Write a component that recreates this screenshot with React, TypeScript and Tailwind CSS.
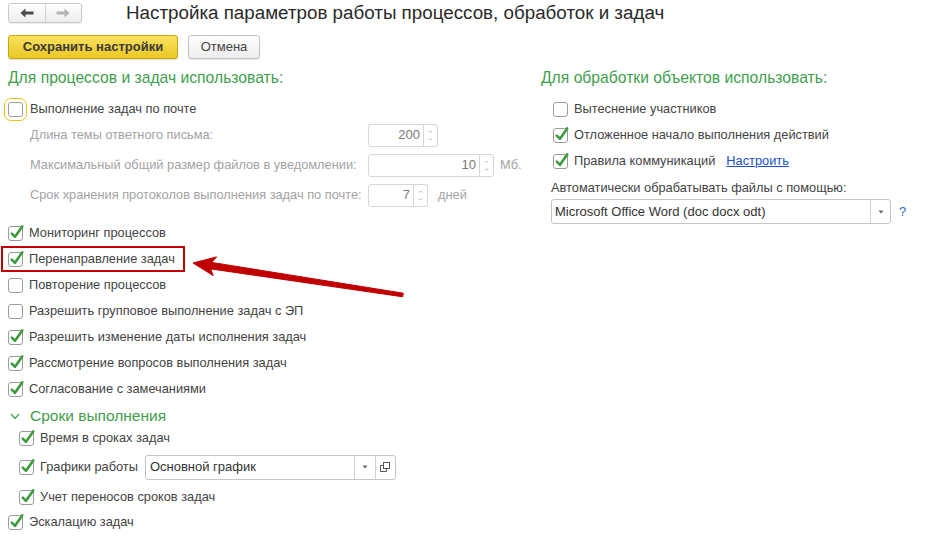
import React from "react";

function Box({ checked, focus }: { checked?: boolean; focus?: boolean }) {
  return (
    <span
      className={
        focus
          ? "relative inline-block w-[15px] h-[15px] shrink-0 rounded-[3px] border border-[#9c9c9c] bg-white outline-solid outline-1 outline-[#f0c21a] outline-offset-[3px]"
          : "relative inline-block w-[15px] h-[15px] shrink-0 rounded-[3px] border border-[#9c9c9c] bg-white"
      }
    >
      {checked && (
        <svg
          className="absolute left-[0px] top-[-3px] overflow-visible"
          width="15"
          height="16"
          viewBox="0 0 15 16"
        >
          <path
            d="M2.8 9.6 L6 12.8 L13.2 2.4"
            fill="none"
            stroke="#3c9a3c"
            strokeWidth="2.6"
            strokeLinecap="round"
            strokeLinejoin="round"
          />
        </svg>
      )}
    </span>
  );
}

function SpinArrows() {
  return (
    <div className="flex w-[14px] flex-col items-center justify-center gap-[5px] border-l border-[#d6d6d6]">
      <svg width="5" height="3" viewBox="0 0 5 3">
        <path d="M1 2.5 L2.5 1 L4 2.5" fill="none" stroke="#a8a8a8" strokeWidth="0.9" />
      </svg>
      <svg width="5" height="3" viewBox="0 0 5 3">
        <path d="M1 0.5 L2.5 2 L4 0.5" fill="none" stroke="#a8a8a8" strokeWidth="0.9" />
      </svg>
    </div>
  );
}

function Row({ children, className }: { children: React.ReactNode; className: string }) {
  return <div className={className}>{children}</div>;
}

function DropTri() {
  return (
    <svg width="6" height="4" viewBox="0 0 6 4">
      <path d="M0.5 0.5 L5.5 0.5 L3 3.5 Z" fill="#666" />
    </svg>
  );
}

export default function App() {
  return (
    <div className="relative w-[926px] h-[545px] overflow-hidden bg-white font-['Liberation_Sans',Arial,sans-serif] text-[12.8px] text-[#444]">
      {/* header */}
      <div className="flex items-start pt-[3px] pl-[8px]">
        <div className="flex h-[20px] w-[74px] rounded-[3px] border border-[#c9c9c9] bg-gradient-to-b from-white to-[#ececec] shadow-[0_1px_1px_rgba(0,0,0,0.08)]">
          <div className="flex w-[37px] items-center justify-center border-r border-[#d2d2d2]">
            <svg width="14" height="10" viewBox="0 0 14 10">
              <path d="M0.5 5 L5.5 0.5 L5.5 3.4 L13.5 3.4 L13.5 6.6 L5.5 6.6 L5.5 9.5 Z" fill="#4a4a4a" />
            </svg>
          </div>
          <div className="flex w-[36px] items-center justify-center">
            <svg width="14" height="10" viewBox="0 0 14 10">
              <path d="M13.5 5 L8.5 0.5 L8.5 3.4 L0.5 3.4 L0.5 6.6 L8.5 6.6 L8.5 9.5 Z" fill="#b4b4b4" />
            </svg>
          </div>
        </div>
        <div className="ml-[44px] text-[18.8px] leading-[20px] text-[#2a2a2a]">
          Настройка параметров работы процессов, обработок и задач
        </div>
      </div>

      {/* buttons */}
      <div className="mt-[12px] flex gap-[10px] pl-[8px]">
        <div className="flex h-[24px] w-[170px] items-center justify-center rounded-[3px] border border-[#c7a514] bg-gradient-to-b from-[#f9e15a] to-[#ebc821] text-[13px] font-bold text-[#3a3a3a] shadow-[0_1px_1px_rgba(0,0,0,0.15)]">
          Сохранить настройки
        </div>
        <div className="flex h-[24px] w-[72px] items-center justify-center rounded-[3px] border border-[#c2c2c2] bg-gradient-to-b from-white to-[#ededed] text-[13px] text-[#444] shadow-[0_1px_1px_rgba(0,0,0,0.1)]">
          Отмена
        </div>
      </div>

      {/* columns */}
      <div className="mt-[9px] flex">
        {/* left column */}
        <div className="w-[533px] pl-[8px]">
          <div className="h-[20px] text-[15.7px] leading-[20px] text-[#3f9e4d]">
            Для процессов и задач использовать:
          </div>
          <Row className="mt-[10px] flex h-[22px] items-center gap-[7px]">
            <Box focus />
            <span>Выполнение задач по почте</span>
          </Row>
          <div className="pl-[22px] text-[#a3a3a3]">
            <div className="flex h-[30px] items-center">
              <span className="w-[338px]">Длина темы ответного письма:</span>
              <div className="flex h-[23px] w-[70px] rounded-[3px] border border-[#d6d6d6] bg-white">
                <span className="flex flex-1 items-center justify-end pr-[3px] text-[13px] text-[#7a7a7a]">200</span>
                <SpinArrows />
              </div>
            </div>
            <div className="flex h-[30px] items-center">
              <span className="w-[338px]">Максимальный общий размер файлов в уведомлении:</span>
              <div className="flex h-[23px] w-[126px] rounded-[3px] border border-[#d6d6d6] bg-white">
                <span className="flex flex-1 items-center justify-end pr-[3px] text-[13px] text-[#7a7a7a]">10</span>
                <SpinArrows />
              </div>
              <span className="ml-[6px]">Мб.</span>
            </div>
            <div className="flex h-[30px] items-center">
              <span className="w-[338px]">Срок хранения протоколов выполнения задач по почте:</span>
              <div className="flex h-[23px] w-[60px] rounded-[3px] border border-[#d6d6d6] bg-white">
                <span className="flex flex-1 items-center justify-end pr-[3px] text-[13px] text-[#7a7a7a]">7</span>
                <SpinArrows />
              </div>
              <span className="ml-[10px]">дней</span>
            </div>
          </div>

          <div className="mt-[10px]">
            <Row className="flex h-[26px] items-center gap-[6px]">
              <Box checked />
              <span>Мониторинг процессов</span>
            </Row>
            <Row className="flex h-[26px] items-center gap-[6px]">
              <Box checked />
              <span>Перенаправление задач</span>
            </Row>
            <Row className="flex h-[26px] items-center gap-[6px]">
              <Box />
              <span>Повторение процессов</span>
            </Row>
            <Row className="flex h-[26px] items-center gap-[6px]">
              <Box />
              <span>Разрешить групповое выполнение задач с ЭП</span>
            </Row>
            <Row className="flex h-[26px] items-center gap-[6px]">
              <Box checked />
              <span>Разрешить изменение даты исполнения задач</span>
            </Row>
            <Row className="flex h-[26px] items-center gap-[6px]">
              <Box checked />
              <span>Рассмотрение вопросов выполнения задач</span>
            </Row>
            <Row className="flex h-[26px] items-center gap-[6px]">
              <Box checked />
              <span>Согласование с замечаниями</span>
            </Row>
          </div>

          <Row className="mt-[2px] flex h-[24px] items-center">
            <svg className="ml-[2px]" width="10" height="7" viewBox="0 0 10 7">
              <path d="M1 1 L5 5.5 L9 1" fill="none" stroke="#4f9e5a" strokeWidth="1.3" />
            </svg>
            <span className="ml-[10px] text-[15.5px] text-[#3f9e4d]">Сроки выполнения</span>
          </Row>
          <div className="pl-[11px]">
            <Row className="flex h-[20px] items-center gap-[6px]">
              <Box checked />
              <span>Время в сроках задач</span>
            </Row>
            <Row className="mt-[5px] flex h-[28px] items-center gap-[6px]">
              <Box checked />
              <span>Графики работы</span>
              <div className="ml-[1px] flex h-[25px] w-[251px] rounded-[3px] border border-[#c4c4c4] bg-white">
                <span className="flex flex-1 items-center pl-[4px] text-[13px] text-[#333]">Основной график</span>
                <span className="flex w-[21px] items-center justify-center border-l border-[#d2d2d2]">
                  <DropTri />
                </span>
                <span className="flex w-[20px] items-center justify-center border-l border-[#d2d2d2]">
                  <svg width="10" height="10" viewBox="0 0 10 10">
                    <rect x="3.5" y="0.5" width="6" height="6" fill="none" stroke="#555" strokeWidth="1" />
                    <path d="M3.5 3.5 L0.5 3.5 L0.5 9.5 L6.5 9.5 L6.5 6.5" fill="none" stroke="#555" strokeWidth="1" />
                  </svg>
                </span>
              </div>
            </Row>
            <Row className="mt-[4px] flex h-[24px] items-center gap-[6px]">
              <Box checked />
              <span>Учет переносов сроков задач</span>
            </Row>
          </div>
          <Row className="flex h-[26px] items-center gap-[6px]">
            <Box checked />
            <span>Эскалацию задач</span>
          </Row>
        </div>

        {/* right column */}
        <div className="pl-[8px]">
          <div className="h-[20px] text-[15.7px] leading-[20px] text-[#3f9e4d]">
            Для обработки объектов использовать:
          </div>
          <div className="mt-[8px] pl-[12px]">
            <Row className="flex h-[26px] items-center gap-[6px]">
              <Box />
              <span>Вытеснение участников</span>
            </Row>
            <Row className="flex h-[26px] items-center gap-[6px]">
              <Box checked />
              <span>Отложенное начало выполнения действий</span>
            </Row>
            <Row className="flex h-[26px] items-center gap-[6px]">
              <Box checked />
              <span>Правила коммуникаций</span>
              <span className="ml-[5px] text-[#2051c8] underline">Настроить</span>
            </Row>
          </div>
          <div className="mt-[4px] h-[20px] pl-[10px] leading-[20px]">
            Автоматически обрабатывать файлы с помощью:
          </div>
          <div className="mt-[1px] flex items-center pl-[10px]">
            <div className="flex h-[25px] w-[340px] rounded-[3px] border border-[#c4c4c4] bg-white">
              <span className="flex flex-1 items-center pl-[3px] text-[13px] text-[#333]">Microsoft Office Word (doc docx odt)</span>
              <span className="flex w-[20px] items-center justify-center border-l border-[#d2d2d2]">
                <DropTri />
              </span>
            </div>
            <span className="ml-[8px] text-[13px] text-[#2b6bd0]">?</span>
          </div>
        </div>
      </div>

      {/* annotation: red frame */}
      <div className="absolute left-[1px] top-[246px] h-[26px] w-[184px] border-2 border-[#c00000]" />
      {/* annotation: arrow */}
      <svg className="pointer-events-none absolute left-0 top-0" width="926" height="545" viewBox="0 0 926 545">
        <polygon
          points="193,263 216.6,256.9 211.6,262.4 403.3,293.2 402.7,296.8 210.6,268.9 213.2,275.6"
          fill="#c00000"
          strokeLinejoin="round"
          stroke="#c00000"
          strokeWidth="1"
        />
      </svg>
    </div>
  );
}
